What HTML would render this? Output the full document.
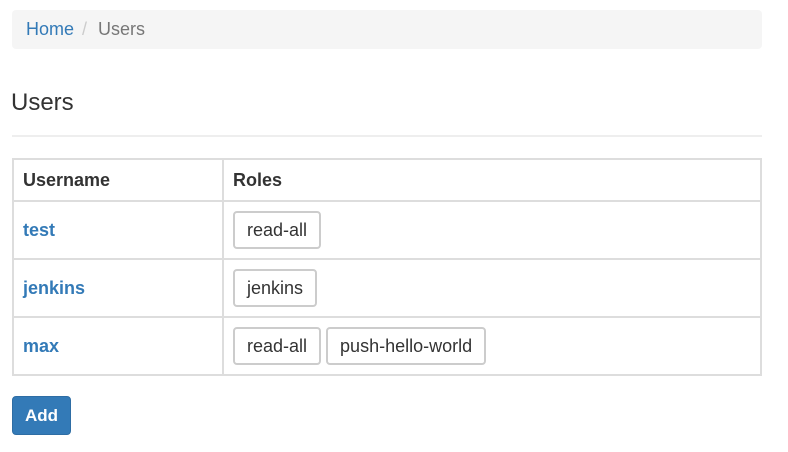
<!DOCTYPE html>
<html><head><style>
body{margin:0;background:#fff;font-family:"Liberation Sans",Arial,sans-serif;color:#333;font-size:17px;}
.bc{position:absolute;left:12px;top:10px;width:750px;height:39px;background:#f5f5f5;border-radius:4px;}
.bc span{position:absolute;top:9px;font-size:18px;line-height:21px;}
h1{position:absolute;left:11px;top:89px;margin:0;font-size:24px;font-weight:500;line-height:28px;color:#333;}
.hr{position:absolute;left:12px;top:135px;width:750px;height:2px;background:#eee;}
table{position:absolute;left:12px;top:158px;width:750px;border-collapse:collapse;}
td,th{border:2px solid #ddd;padding:0 9px;text-align:left;font-size:18px;}
th{height:40px;font-weight:bold;}
td{height:56px;}
a{color:#337ab7;text-decoration:none;font-weight:bold;}
.t{display:inline-block;border:2px solid #ccc;border-radius:4px;padding:0 12px;height:34px;line-height:34px;font-size:18px;margin-right:0px;box-sizing:content-box;}
.btn{position:absolute;left:12px;top:396px;width:59px;height:39px;background:#337ab7;border:1px solid #2e6da4;box-sizing:border-box;border-radius:4px;color:#fff;font-weight:bold;font-size:17px;line-height:37px;text-align:center;}
</style></head><body>
<div class="bc"><span style="left:14px;color:#337ab7">Home</span><span style="left:70px;color:#ccc">/</span><span style="left:86px;color:#777">Users</span></div>
<h1>Users</h1>
<div class="hr"></div>
<table>
<tr><th style="width:190px">Username</th><th>Roles</th></tr>
<tr><td><a>test</a></td><td><span class="t">read-all</span></td></tr>
<tr><td><a>jenkins</a></td><td><span class="t">jenkins</span></td></tr>
<tr><td><a>max</a></td><td><span class="t">read-all</span> <span class="t">push-hello-world</span></td></tr>
</table>
<div class="btn">Add</div>
</body></html>
